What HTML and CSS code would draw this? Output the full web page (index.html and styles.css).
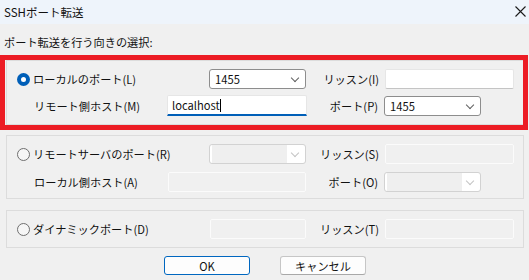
FILE: index.html
```html
<!DOCTYPE html>
<html lang="ja">
<head>
  <meta charset="UTF-8">
  <title>SSHポート転送</title>
  <link rel="stylesheet" href="styles.css">
</head>
<body>
  <div class="titlebar">
    <span class="title">SSHポート転送</span>
    <svg class="close" width="11" height="11" viewBox="0 0 11 11">
      <path d="M0.5 0.5 L10.5 10.5 M10.5 0.5 L0.5 10.5" stroke="#1a1a1a" stroke-width="1.1" fill="none"/>
    </svg>
  </div>

  <div class="prompt">ポート転送を行う向きの選択:</div>

  <div class="group g1">
    <div class="row">
      <label class="lead w202"><span class="radio on"></span>ローカルのポート(L)</label>
      <div class="combo">1455<span class="chev"></span></div>
      <span class="cap w79">リッスン(I)</span>
      <div class="edit w129"></div>
    </div>
    <div class="row">
      <span class="lead sub w160">リモート側ホスト(M)</span>
      <div class="edit focus w140">localhost<span class="caret"></span></div>
      <span class="cap w77">ポート(P)</span>
      <div class="combo">1455<span class="chev"></span></div>
    </div>
  </div>

  <div class="group g2">
    <div class="row">
      <label class="lead w202"><span class="radio"></span>リモートサーバのポート(R)</label>
      <div class="combo off"><span class="chev"></span></div>
      <span class="cap w79">リッスン(S)</span>
      <div class="edit off w129"></div>
    </div>
    <div class="row">
      <span class="lead sub w161">ローカル側ホスト(A)</span>
      <div class="edit off w138"></div>
      <span class="cap w78">ポート(O)</span>
      <div class="combo off"><span class="chev"></span></div>
    </div>
  </div>

  <div class="group g3">
    <div class="row">
      <label class="lead w203"><span class="radio"></span>ダイナミックポート(D)</label>
      <div class="edit off w96"></div>
      <span class="cap w79">リッスン(T)</span>
      <div class="edit off w129"></div>
    </div>
  </div>

  <div class="buttons">
    <button class="btn default">OK</button>
    <button class="btn">キャンセル</button>
  </div>

  <div class="highlight"></div>
</body>
</html>
```

FILE: styles.css
```css
body {
  margin: 0;
  width: 529px;
  height: 280px;
  background: #f0f0f0;
  font-family: "Noto Sans CJK JP", sans-serif;
  font-size: 11.2px;
  color: #111;
  position: relative;
  overflow: hidden;
}
.titlebar {
  height: 24px;
  background: #eef4fb;
  display: flex;
  align-items: center;
  justify-content: space-between;
  padding: 0 3px 0 4px;
}
.title {
  font-size: 11.5px;
}
.close {
  margin-top: -2px;
}
.prompt {
  height: 36px;
  box-sizing: border-box;
  padding: 8px 0 0 4px;
  line-height: 20px;
}
.group {
  box-sizing: border-box;
  width: 518px;
  margin-left: 6px;
  border: 1px solid #dcdcdc;
  display: flex;
  flex-direction: column;
}
.g1 {
  height: 65px;
  padding-top: 8px;
  gap: 7px;
}
.g2 {
  height: 64px;
  margin-top: 10px;
  padding-top: 8px;
  gap: 8px;
}
.g3 {
  height: 38px;
  margin-top: 11px;
  padding-top: 8px;
}
.row {
  display: flex;
  align-items: center;
  height: 20px;
}
.lead {
  display: flex;
  align-items: center;
  box-sizing: border-box;
  padding-left: 10px;
  white-space: nowrap;
}
.lead.sub {
  padding-left: 27px;
}
.w202 { width: 202px; }
.w203 { width: 203px; }
.w160 { width: 160px; }
.w161 { width: 161px; }
.w79 { width: 79px; }
.w78 { width: 78px; }
.w77 { width: 77px; }
.w96 { width: 96px; }
.w129 { width: 129px; }
.w138 { width: 138px; }
.w140 { width: 140px; }

.radio {
  box-sizing: border-box;
  width: 13px;
  height: 13px;
  border-radius: 50%;
  border: 1px solid #6f6f6f;
  background: #f6f6f6;
  margin-right: 3px;
  flex: none;
  display: flex;
  align-items: center;
  justify-content: center;
}
.radio.on {
  border: none;
  background: #005fb8;
}
.radio.on::after {
  content: "";
  width: 5px;
  height: 5px;
  border-radius: 50%;
  background: #fff;
}
.cap {
  box-sizing: border-box;
  text-align: right;
  padding-right: 6px;
  white-space: nowrap;
}
.combo {
  box-sizing: border-box;
  width: 97px;
  height: 20px;
  border: 1px solid #8d8d8d;
  border-radius: 3px;
  background: #fff;
  padding-left: 5px;
  line-height: 18px;
  position: relative;
}
.combo.off {
  border-color: #d2d2d2;
  background: linear-gradient(to right, #fff 2px, #efefef 2px, #efefef 77px, #fff 77px);
}
.chev {
  position: absolute;
  right: 7px;
  top: 5px;
  width: 5px;
  height: 5px;
  border-right: 1px solid #606060;
  border-bottom: 1px solid #606060;
  transform: rotate(45deg);
}
.combo.off .chev {
  border-color: #c4c4c4;
}
.edit {
  box-sizing: border-box;
  height: 20px;
  background: #fff;
  border: 1px solid #e6e6e6;
  border-bottom-color: #c4c4c4;
  border-radius: 2px;
  padding-left: 4px;
  line-height: 18px;
}
.edit.focus {
  height: 21px;
  margin-top: -1px;
  border-bottom: 2px solid #005fb8;
  border-radius: 2px 2px 0 0;
}
.edit.off {
  background: #f0f0f0;
  border-color: #fbfbfb;
}
.caret {
  display: inline-block;
  width: 1px;
  height: 13px;
  background: #000;
  vertical-align: -2px;
}
.buttons {
  display: flex;
  justify-content: center;
  gap: 30px;
  margin-top: 8px;
  padding-left: 1px;
}
.btn {
  box-sizing: border-box;
  width: 86px;
  height: 19px;
  padding: 0;
  font-family: inherit;
  font-size: 11.2px;
  line-height: 16px;
  background: #fdfdfd;
  border: 1px solid #c6c6c6;
  border-bottom-color: #a8a8a8;
  border-radius: 3px;
  color: #111;
}
.btn.default {
  border: 1px solid #0067c0;
}
.highlight {
  position: absolute;
  left: 0;
  top: 55px;
  width: 528px;
  height: 75px;
  box-sizing: border-box;
  border: 5px solid #ec1c24;
}
```
